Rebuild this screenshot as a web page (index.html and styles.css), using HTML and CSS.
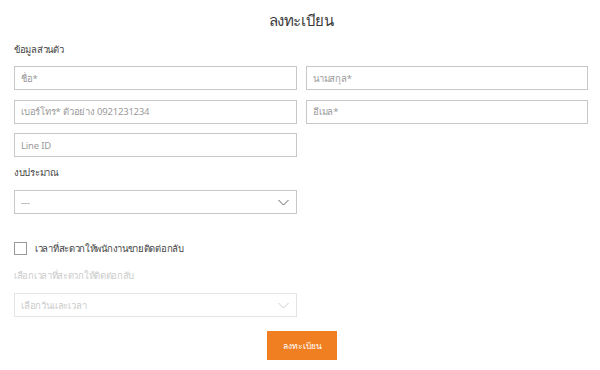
FILE: index.html
```html
<!DOCTYPE html>
<html lang="th">
<head>
    <meta charset="UTF-8">
    <meta name="viewport" content="width=device-width, initial-scale=1.0">
    <title>ลงทะเบียน</title>
    <link rel="stylesheet" href="styles.css">
</head>
<body>
    <form class="register">
        <h1 class="title">ลงทะเบียน</h1>

        <div class="group-label">ข้อมูลส่วนตัว</div>
        <div class="field-grid">
            <input class="field" type="text" placeholder="ชื่อ*">
            <input class="field" type="text" placeholder="นามสกุล*">
            <input class="field" type="tel" placeholder="เบอร์โทร* ตัวอย่าง 0921231234">
            <input class="field" type="email" placeholder="อีเมล*">
            <input class="field" type="text" placeholder="Line ID">
        </div>

        <div class="group-label budget-label">งบประมาณ</div>
        <div class="select-box">
            <span class="select-value">---</span>
            <svg class="chevron" width="11" height="7" viewBox="0 0 11 7"><path d="M0.5 1 L5.5 6 L10.5 1" fill="none" stroke="#666" stroke-width="1"/></svg>
        </div>

        <label class="check-row">
            <span class="check-box"></span>
            <span class="check-text">เวลาที่สะดวกให้พนักงานขายติดต่อกลับ</span>
        </label>

        <div class="group-label muted">เลือกเวลาที่สะดวกให้ติดต่อกลับ</div>
        <div class="select-box disabled">
            <span class="select-value">เลือกวันและเวลา</span>
            <svg class="chevron" width="11" height="7" viewBox="0 0 11 7"><path d="M0.5 1 L5.5 6 L10.5 1" fill="none" stroke="#ccc" stroke-width="1"/></svg>
        </div>

        <div class="actions">
            <button class="submit-btn" type="button">ลงทะเบียน</button>
        </div>
    </form>
</body>
</html>
```

FILE: styles.css
```css
* {
    margin: 0;
    padding: 0;
    box-sizing: border-box;
}

body {
    font-family: "Noto Sans", "DejaVu Sans", sans-serif;
    background: #fff;
    color: #333;
}

.register {
    padding: 10px 12px 0 14px;
}

.title {
    text-align: center;
    font-size: 15px;
    font-weight: normal;
    letter-spacing: -0.4px;
    color: #3a3a3a;
    line-height: 20px;
    margin-bottom: 13px;
}

.group-label {
    font-size: 9.5px;
    letter-spacing: -0.3px;
    line-height: 14px;
    color: #444;
    margin-bottom: 9px;
}

.field-grid {
    display: grid;
    grid-template-columns: 283px 282px;
    column-gap: 9px;
    row-gap: 9.5px;
}

.field {
    height: 24px;
    border: 1px solid #c8c8c8;
    padding: 0 6px;
    font-family: inherit;
    font-size: 9.5px;
    letter-spacing: -0.2px;
    color: #333;
    outline: none;
}

.field::placeholder {
    color: #9a9a9a;
}

.budget-label {
    margin-top: 9px;
    margin-bottom: 10px;
}

.select-box {
    width: 283px;
    height: 24px;
    border: 1px solid #c8c8c8;
    display: flex;
    align-items: center;
    justify-content: space-between;
    padding: 0 7px 0 6px;
    font-size: 9.5px;
    letter-spacing: -0.2px;
    color: #999;
}

.select-box.disabled {
    border-color: #e4e4e4;
    color: #ccc;
}

.check-row {
    display: flex;
    align-items: center;
    gap: 8px;
    margin-top: 27px;
    margin-bottom: 13px;
}

.check-box {
    width: 13px;
    height: 13px;
    border: 1px solid #999;
}

.check-text {
    font-size: 9.5px;
    letter-spacing: -0.3px;
    color: #444;
}

.muted {
    color: #ccc;
    margin-bottom: 10px;
}

.actions {
    display: flex;
    justify-content: center;
    margin-top: 14px;
    padding-left: 2px;
}

.submit-btn {
    width: 70px;
    height: 29px;
    background: #f07f22;
    color: #fff;
    border: none;
    font-family: inherit;
    font-size: 8.5px;
}
```
